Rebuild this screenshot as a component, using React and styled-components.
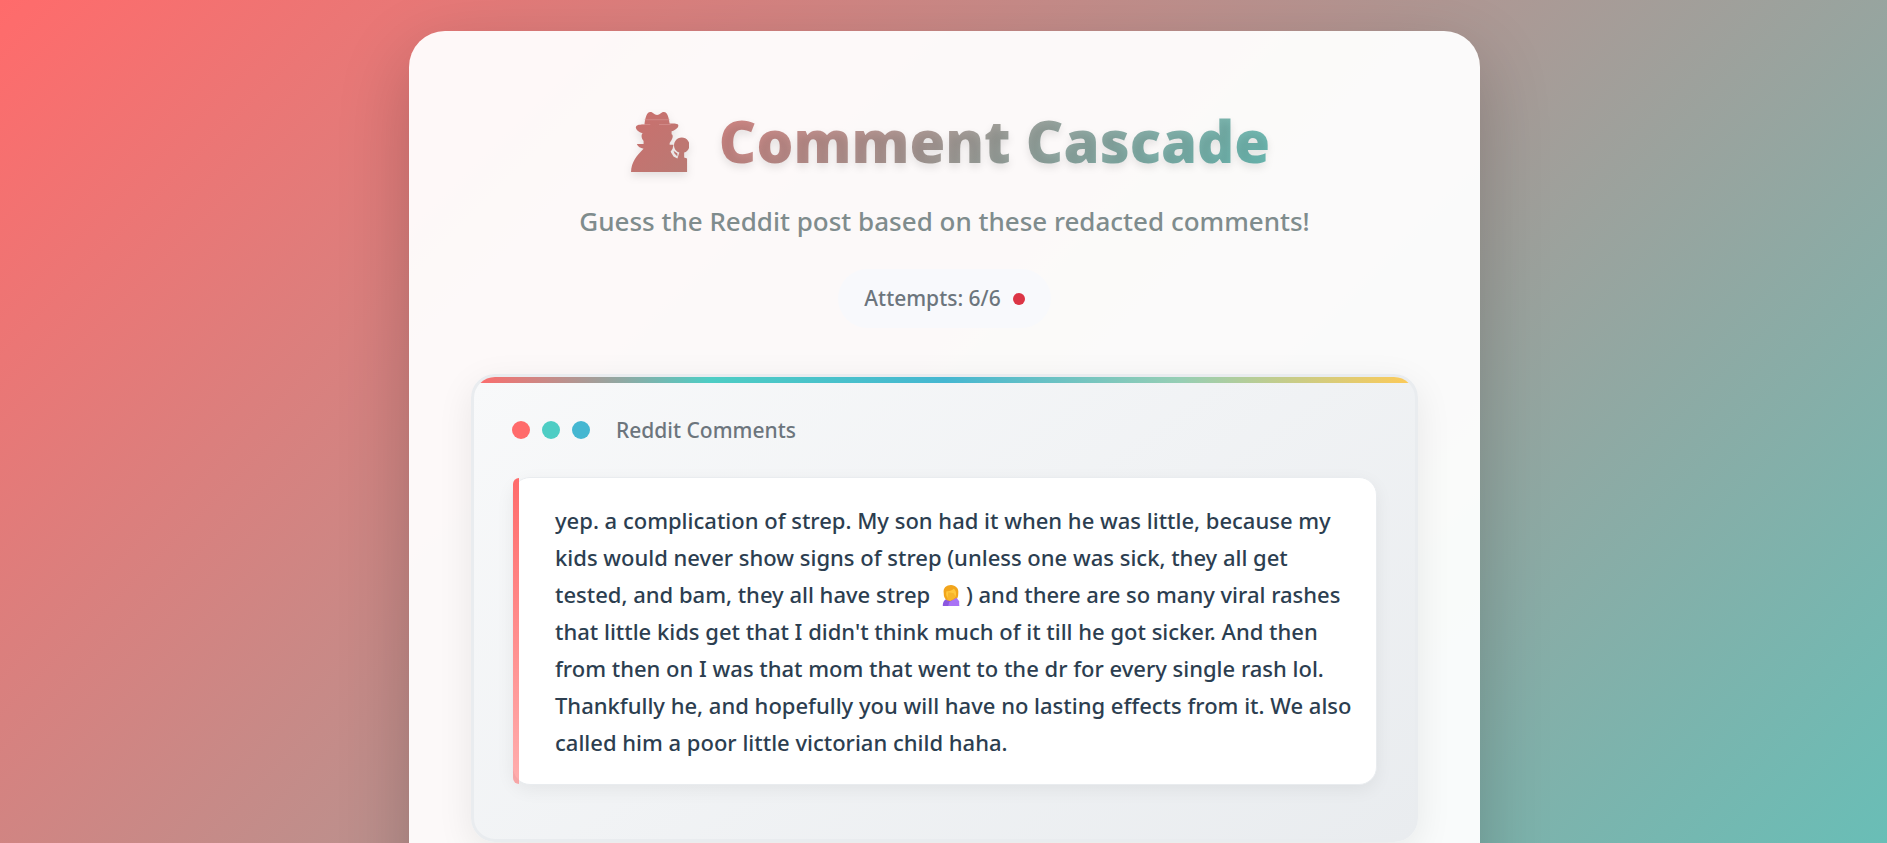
import styled, { createGlobalStyle } from "styled-components";

const GlobalStyle = createGlobalStyle`
    *, *::before, *::after{
        box-sizing: border-box;
    }

    body{
        margin: 0;
        font-family: "Segoe UI", "Noto Sans", "Open Sans", sans-serif;
        color: #2c3e50;
    }
`

const Page = styled.div`
    height: 100vh;
    overflow: hidden;
    padding: 31px 24px 0 26px;
    background: linear-gradient(135deg, #ff6b6b 0%, #4ecdc4 118%);
`

const Container = styled.main`
    max-width: 1071px;
    min-height: 130vh;
    margin: 0 auto;
    padding: 60px 62px;
    border-radius: 36px;
    background: rgba(255, 255, 255, .95);
    box-shadow: 0 24px 72px rgba(0, 0, 0, .2);
`

const Header = styled.header`
    display: flex;
    flex-direction: column;
    align-items: center;
    text-align: center;
    margin-bottom: 46px;
`

const Title = styled.h1`
    display: flex;
    align-items: center;
    justify-content: center;
    gap: 30px;
    width: 100%;
    margin: 0 0 12px;
    font-family: "Segoe UI", "Open Sans", sans-serif;
    font-size: 58px;
    line-height: 100px;
    font-weight: 800;
    color: transparent;
    background: linear-gradient(135deg, #ff6b6b, #4ecdc4);
    background-clip: text;
    -webkit-background-clip: text;
    text-shadow: 0 4px 8px rgba(0, 0, 0, .1);

    svg{
        width: 58px;
        height: 62px;
        margin-left: 12px;
        filter: drop-shadow(0 4px 4px rgba(0, 0, 0, .1));
    }
`

const Subtitle = styled.p`
    margin: 0 0 30px;
    font-size: 26px;
    line-height: 36px;
    font-weight: 500;
    color: #7f8c8d;
`

const Attempts = styled.div`
    display: inline-flex;
    align-items: center;
    gap: 12px;
    padding: 12px 26px;
    border-radius: 30px;
    background: #f8f9fc;
    color: #6c757d;
    font-size: 21px;
    line-height: 35px;
    font-weight: 500;
`

const Dot = styled.span`
    width: ${({ $size }) => $size}px;
    height: ${({ $size }) => $size}px;
    border-radius: 50%;
    background: ${({ $color }) => $color};
`

const Panel = styled.section`
    position: relative;
    overflow: hidden;
    padding: 36px 38px;
    border: 3px solid #e9ecef;
    border-radius: 24px;
    background: linear-gradient(145deg, #f8f9fa, #e9ecef);
    box-shadow: 0 10px 36px rgba(0, 0, 0, .08);

    &::before{
        content: "";
        position: absolute;
        top: 0;
        left: 0;
        right: 0;
        height: 6px;
        background: linear-gradient(90deg, #ff6b6b, #4ecdc4, #45b7d1, #96ceb4, #feca57);
    }
`

const PanelHeader = styled.div`
    display: flex;
    align-items: center;
    gap: 12px;
    margin-bottom: 30px;

    h2{
        margin: 0 0 0 14px;
        font-size: 21px;
        line-height: 34px;
        font-weight: 500;
        color: #6c757d;
    }
`

const Comment = styled.blockquote`
    position: relative;
    margin: 0 0 18px;
    padding: 24px 24px 23px 42px;
    border: 1px solid #e9ecef;
    border-radius: 18px;
    background: #fff;
    box-shadow: 0 5px 18px rgba(0, 0, 0, .06);
    font-size: 22px;
    line-height: 37px;
    font-weight: 500;

    &::before{
        content: "";
        position: absolute;
        top: 0;
        left: 0;
        bottom: 0;
        width: 6px;
        border-radius: 6px 0 0 6px;
        background: linear-gradient(180deg, #ff6b6b, rgba(255, 107, 107, .55));
    }

    svg{
        width: 20px;
        height: 22px;
        margin: 0 5px;
        vertical-align: -3px;
    }
`

function Detective() {
    return (
        <svg viewBox="0 0 60 62" aria-hidden="true">
            <defs>
                <linearGradient id="coat" x1="0" y1="0" x2="1" y2="1">
                    <stop offset="0" stopColor="#cb6f6d" />
                    <stop offset="1" stopColor="#b97a74" />
                </linearGradient>
            </defs>
            <path fill="url(#coat)" d="M14 13c1-6 2-12 6-12 3 0 4 3 7 3s4-3 7-3c4 0 5 6 6 12 5 0 9 0 9 2 0 3-4 5-7 6v3c2 1 1 4 0 6l-2 3v2h4l-1 4-2 3 3 5 4 2 2-6a8 8 0 1 1 5 0v5l3 1v14l-2 1H0c0-11 6-18 13-25-3-1-6-2-7-5h7v-3c-2-2-3-6-1-8-4-1-7-4-7-6 0-3 5-3 9-3Zm34 31-4-3 1 3 3 3Z" />
            <path stroke="#d99a98" strokeWidth="0.6" d="M14 9h26M11 14h9M29 14h12" />
        </svg>
    )
}

function Facepalm() {
    return (
        <svg viewBox="0 0 22 24" role="img" aria-label="woman facepalming">
            <path fill="#8b57e0" d="M2 24c0-5 2-8 7-8 6-1 11 1 11 8Z" />
            <path fill="#f2a51c" d="M3 10C2 4 6 1 11 1s9 4 8 9c0 4-1 6-3 8H7c-3-2-4-4-4-8Z" />
            <path fill="#ffc83d" d="M6 8c3 0 6-1 8-3 3 2 3 6 2 9l-4 3H9c-3-2-4-6-3-9Z" />
            <path fill="#f7b52c" d="M8 9l6 1 2 4-6 5-3-2Z" />
            <path fill="#a973f5" d="M9 20l8-5 3 4v5H8Z" />
        </svg>
    )
}

export default function App() {
    return (
        <>
            <GlobalStyle />
            <Page>
                <Container>
                    <Header>
                        <Title>
                            <Detective />
                            <span>Comment Cascade</span>
                        </Title>
                        <Subtitle>Guess the Reddit post based on these redacted comments!</Subtitle>
                        <Attempts>
                            <span>Attempts: 6/6</span>
                            <Dot $size={12} $color="#dc3545" />
                        </Attempts>
                    </Header>
                    <Panel>
                        <PanelHeader>
                            <Dot $size={18} $color="#ff6b6b" />
                            <Dot $size={18} $color="#4ecdc4" />
                            <Dot $size={18} $color="#45b7d1" />
                            <h2>Reddit Comments</h2>
                        </PanelHeader>
                        <Comment>
                            yep. a complication of strep. My son had it when he was little, because my kids would never show signs of strep (unless one was sick, they all get tested, and bam, they all have strep <Facepalm />) and there are so many viral rashes that little kids get that I didn't think much of it till he got sicker. And then from then on I was that mom that went to the dr for every single rash lol. Thankfully he, and hopefully you will have no lasting effects from it. We also called him a poor little victorian child haha.
                        </Comment>
                    </Panel>
                </Container>
            </Page>
        </>
    )
}
